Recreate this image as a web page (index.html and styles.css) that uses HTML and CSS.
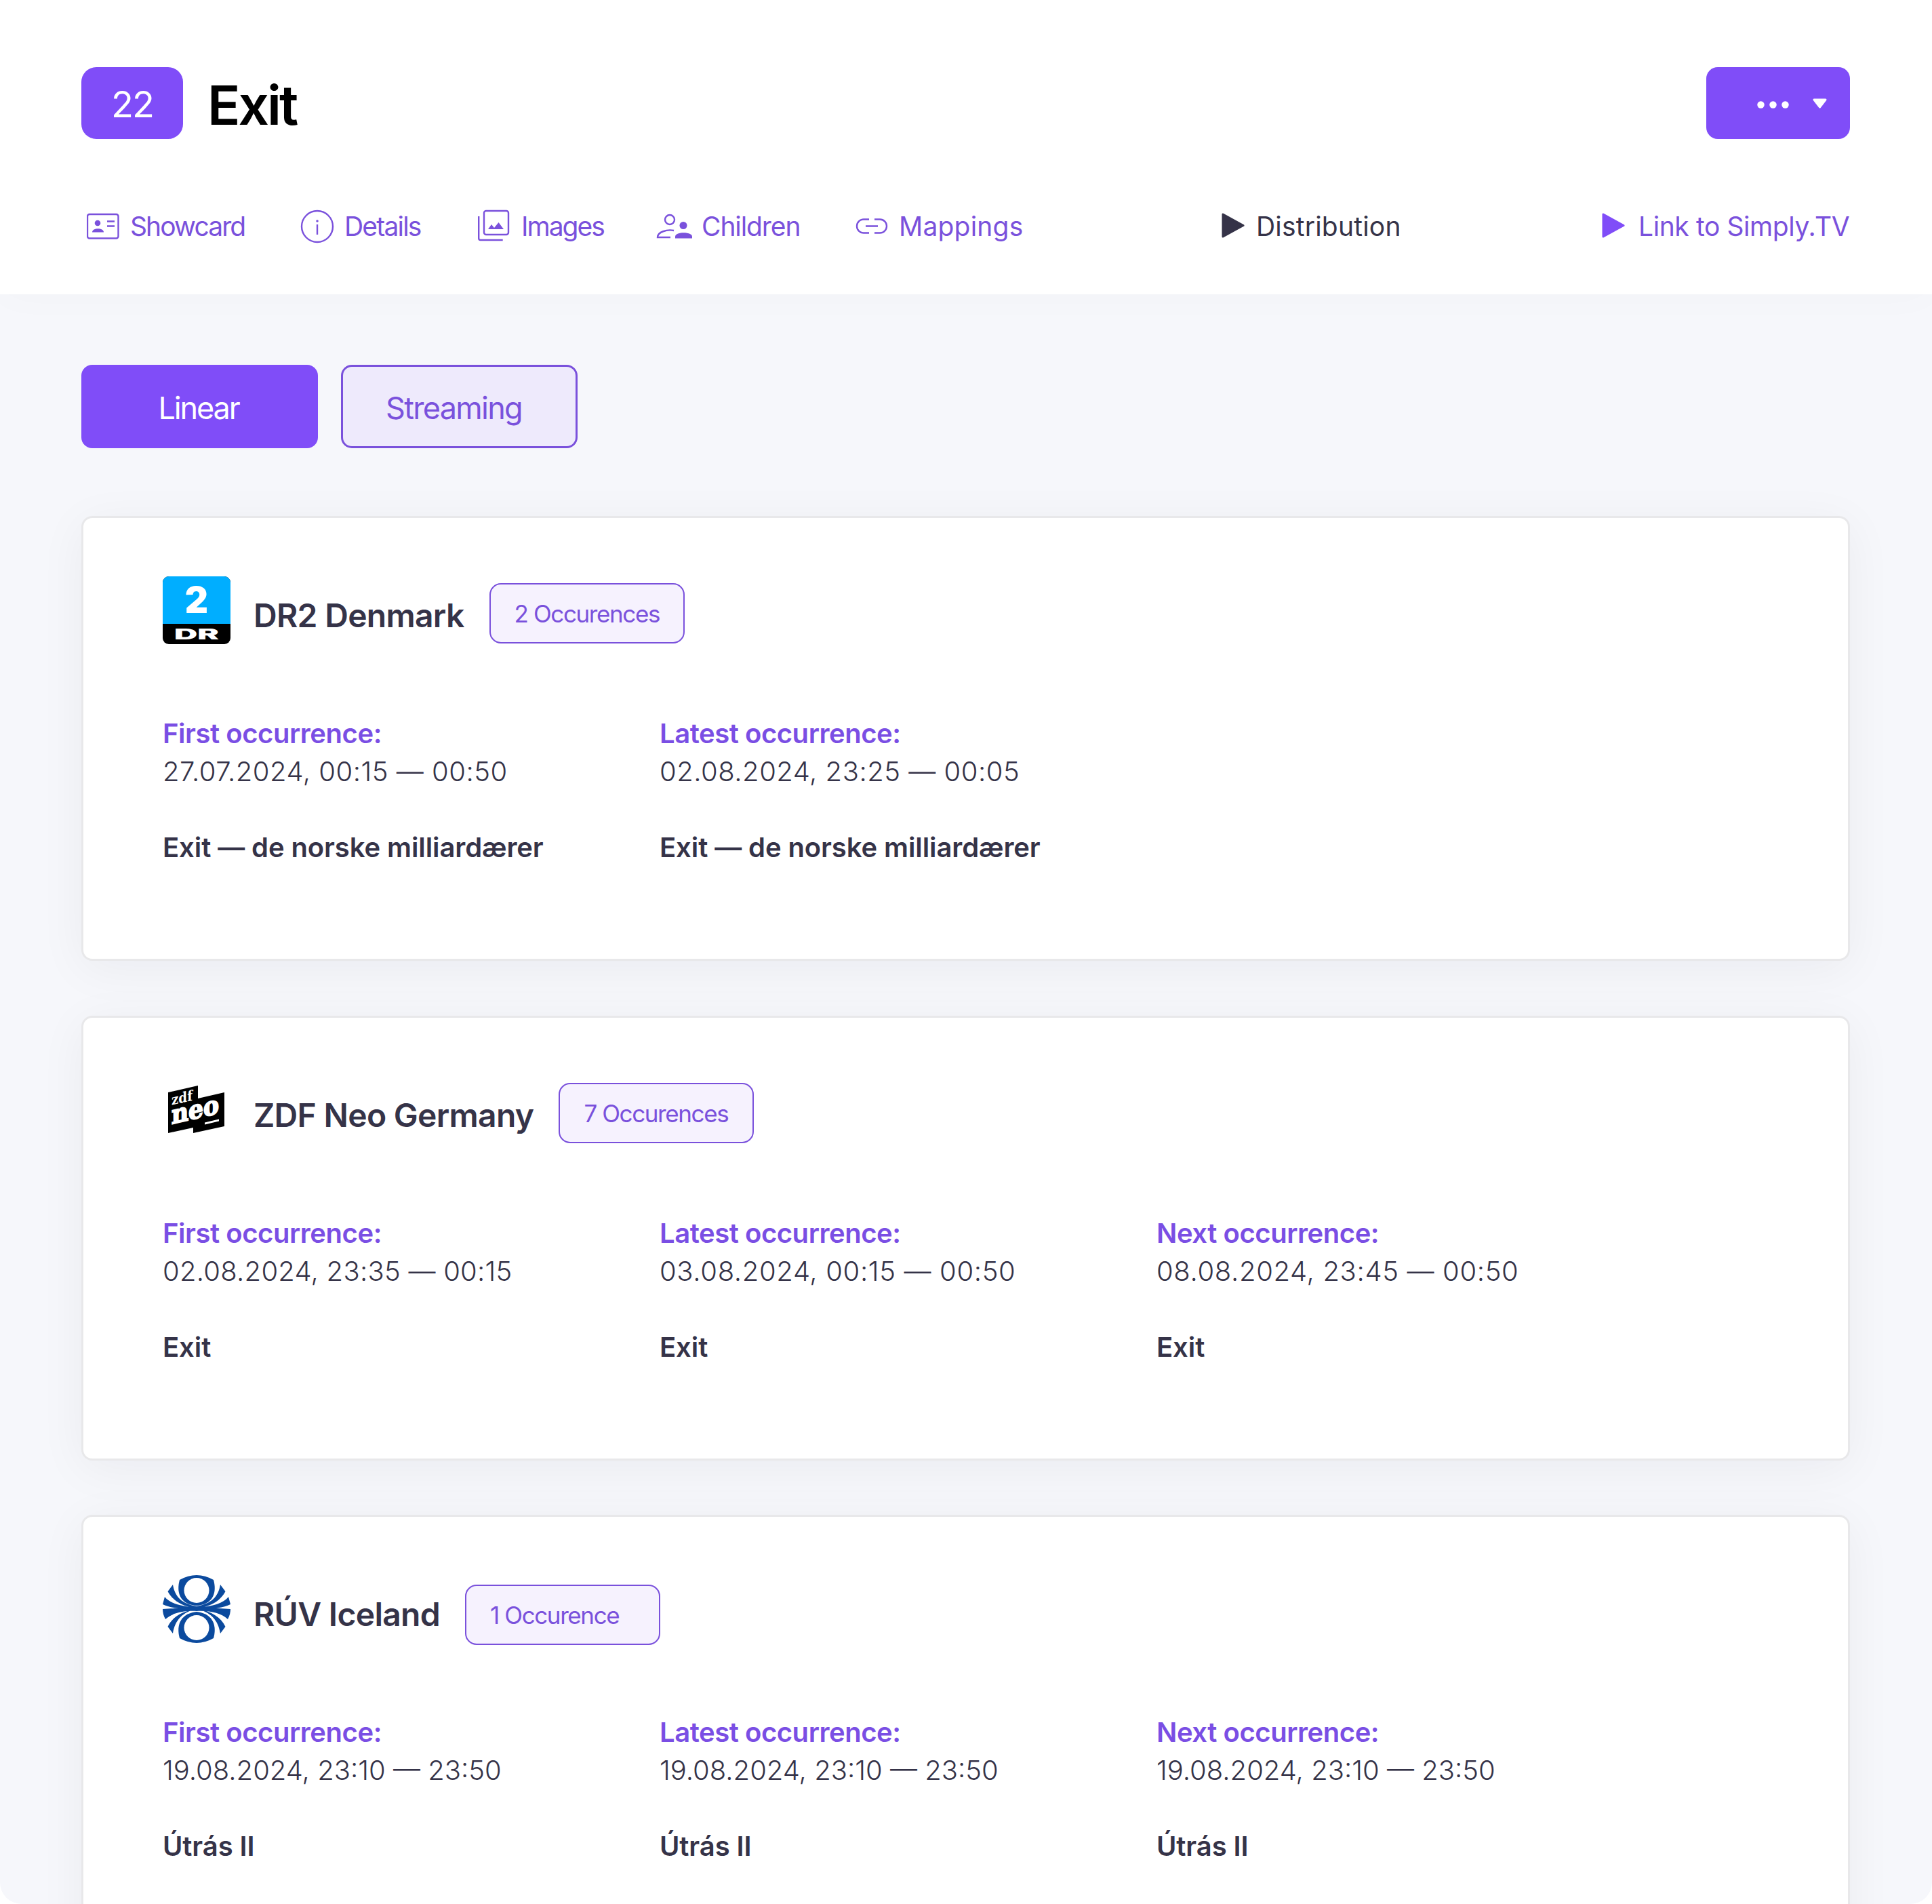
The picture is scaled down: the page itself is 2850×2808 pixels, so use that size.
FILE: index.html
```html
<!DOCTYPE html>
<html lang="en">
<head>
  <meta charset="UTF-8">
  <title>Exit</title>
  <link rel="stylesheet" href="styles.css">
</head>
<body>
<div class="page">
  <header class="header">
    <div class="title-row">
      <span class="count">22</span>
      <h1>Exit</h1>
      <button class="more">
        <svg width="212" height="106" viewBox="0 0 212 106" fill="#fff">
          <circle cx="80.500" cy="55.500" r="5.200"/><circle cx="98.500" cy="55.500" r="5.200"/><circle cx="116.500" cy="55.500" r="5.200"/>
          <path d="M159 48h17l-8.500 11z" stroke="#fff" stroke-width="3" stroke-linejoin="round"/>
        </svg>
      </button>
    </div>
    <nav class="nav">
      <a class="item showcard">
        <svg width="52" height="50" viewBox="0 0 52 50">
          <rect x="1" y="7" width="45.500" height="35.500" rx="3" fill="none" stroke="currentColor" stroke-width="2.400"/>
          <circle cx="16" cy="20" r="4.300"/><path d="M8 33.500c0-7 17-7 17 0z"/>
          <path d="M30 17.500h11M30 24.500h11" stroke="currentColor" stroke-width="2.400"/>
        </svg>
        Showcard</a>
      <a class="item details">
        <svg width="52" height="50" viewBox="0 0 52 50">
          <circle cx="25" cy="25" r="23" fill="none" stroke="currentColor" stroke-width="2.400"/>
          <circle cx="25" cy="17" r="1.800"/><path d="M25 22v15" stroke="currentColor" stroke-width="2.400"/>
        </svg>
        Details</a>
      <a class="item images">
        <svg width="52" height="50" viewBox="0 0 52 50">
          <rect x="10" y="2" width="36" height="35" rx="3" fill="none" stroke="currentColor" stroke-width="2.400"/>
          <path d="M2.200 10v32.500q0 2.500 2.500 2.500h33" fill="none" stroke="currentColor" stroke-width="2.400"/>
          <path d="M16 29l5-7 4 5 6.500-8 7.500 10z"/>
        </svg>
        Images</a>
      <a class="item children">
        <svg width="54" height="50" viewBox="0 0 54 50">
          <circle cx="20" cy="15" r="7" fill="none" stroke="currentColor" stroke-width="2.400"/>
          <path d="M26 31c-10-2-24 2-24 10h19" fill="none" stroke="currentColor" stroke-width="2.400"/>
          <circle cx="40" cy="23.500" r="5.500"/><path d="M28 42.500v-3c1-7 24-7 25 0v3z"/>
        </svg>
        Children</a>
      <a class="item mappings">
        <svg width="52" height="50" viewBox="0 0 52 50" fill="none">
          <path d="M21 14.500h-8a10 10 0 0 0 0 20h8M29 14.500h8a10 10 0 0 1 0 20h-8M16 24.500h18" stroke="currentColor" stroke-width="2.400" fill="none"/>
        </svg>
        Mappings</a>
      <a class="item dark play">
        <svg width="34" height="50" viewBox="0 0 34 50"><path d="M2 7v33l30-16.500z" stroke="currentColor" stroke-width="3" stroke-linejoin="round"/></svg>
        Distribution</a>
      <a class="item play link">
        <svg class="bright" width="34" height="50" viewBox="0 0 34 50"><path d="M2 7v33l30-16.500z" stroke="currentColor" stroke-width="3" stroke-linejoin="round"/></svg>
        Link to Simply.TV</a>
    </nav>
  </header>

  <main>
    <div class="tabs">
      <button class="tab active">Linear</button>
      <button class="tab">Streaming</button>
    </div>

    <section class="card">
      <div class="channel">
        <svg class="logo" viewBox="0 0 100 100">
          <rect width="100" height="100" rx="9" fill="#000"/>
          <path d="M0 70V9a9 9 0 0 1 9-9h82a9 9 0 0 1 9 9v61z" fill="#00aeff"/>
          <text x="50" y="54" class="dr-two">2</text>
          <text x="17" y="92.500" class="dr" textLength="66" lengthAdjust="spacingAndGlyphs">DR</text>
        </svg>
        <h2>DR2 Denmark</h2>
        <span class="pill">2 Occurences</span>
      </div>
      <div class="times">
        <div>
          <b>First occurrence:</b>
          <p>27.07.2024, 00:15 — 00:50</p>
          <strong>Exit — de norske milliardærer</strong>
        </div>
        <div>
          <b>Latest occurrence:</b>
          <p>02.08.2024, 23:25 — 00:05</p>
          <strong>Exit — de norske milliardærer</strong>
        </div>
      </div>
    </section>

    <section class="card">
      <div class="channel">
        <svg class="logo" viewBox="0 0 100 100">
          <path d="M8 24L52 14v19l39-9v50L45 84v-8L8 84z"/>
          <g transform="translate(12 43) skewY(-13)" fill="#fff">
            <text x="1" y="0" class="zdf" textLength="31" lengthAdjust="spacingAndGlyphs">zdf</text>
            <text x="1" y="28" class="neo" textLength="70" lengthAdjust="spacingAndGlyphs">neo</text>
            <rect x="50" y="37" width="21" height="3"/>
          </g>
        </svg>
        <h2>ZDF Neo Germany</h2>
        <span class="pill">7 Occurences</span>
      </div>
      <div class="times">
        <div>
          <b>First occurrence:</b>
          <p class="snug">02.08.2024, 23:35 — 00:15</p>
          <strong>Exit</strong>
        </div>
        <div>
          <b>Latest occurrence:</b>
          <p class="loose">03.08.2024, 00:15 — 00:50</p>
          <strong>Exit</strong>
        </div>
        <div>
          <b>Next occurrence:</b>
          <p class="loose">08.08.2024, 23:45 — 00:50</p>
          <strong>Exit</strong>
        </div>
      </div>
    </section>

    <section class="card">
      <div class="channel">
        <svg class="logo" viewBox="0 0 100 100" fill="#0b4a9e">
          <path d="M25 7Q50-7 75 7C80 25 75 43 50 45 25 43 20 25 25 7z"/>
          <path d="M25 93Q50 107 75 93C80 75 75 57 50 54 25 57 20 75 25 93z"/>
          <path d="M15 14C18 32 28 42 50 46V49C26 46 14 36 7.500 24zM3 32C10 41 25 46 50 48V51C25 50 10 48 0 43zM0 50L50 47V53C30 52 14 56 4 65 1 60 0 54 0 50zM50 50C30 54 18 66 15 86L7.500 76C14 62 28 53 50 50z"/>
          <path d="M85 14C82 32 72 42 50 46V49C74 46 86 36 92.500 24zM97 32C90 41 75 46 50 48V51C75 50 90 48 100 43zM100 50L50 47V53C70 52 86 56 96 65 99 60 100 54 100 50zM50 50C70 54 82 66 85 86L92.500 76C86 62 72 53 50 50z"/>
          <circle cx="50" cy="22.500" r="18.500" fill="#fff"/><circle cx="50" cy="77.500" r="18.500" fill="#fff"/>
        </svg>
        <h2>RÚV Iceland</h2>
        <span class="pill low">1 Occurence</span>
      </div>
      <div class="times">
        <div>
          <b>First occurrence:</b>
          <p class="tight">19.08.2024, 23:10 — 23:50</p>
          <strong>Útrás II</strong>
        </div>
        <div>
          <b>Latest occurrence:</b>
          <p class="tight">19.08.2024, 23:10 — 23:50</p>
          <strong>Útrás II</strong>
        </div>
        <div>
          <b>Next occurrence:</b>
          <p class="tight">19.08.2024, 23:10 — 23:50</p>
          <strong>Útrás II</strong>
        </div>
      </div>
    </section>
  </main>
</div>
</body>
</html>
```
FILE: styles.css
```css
* {
  box-sizing: border-box;
}

body {
  margin: 0;
  background: #fff;
  font-family: Inter, "Liberation Sans", sans-serif;
  color: #353348;
}

.page {
  width: 2850px;
  height: 2808px;
  overflow: hidden;
  background: #f6f7fb;
  border-radius: 0 0 32px 32px;
}

.header {
  height: 434px;
  padding: 99px 121px 0 120px;
  background: #fff;
  box-shadow: 0 0 60px rgba(0, 0, 0, 0.025);
}

.title-row {
  display: flex;
  align-items: center;
  height: 106px;
}

.count {
  width: 150px;
  height: 106px;
  border-radius: 22px;
  background: #804df8;
  color: #fff;
  font-size: 54px;
  letter-spacing: -2px;
  line-height: 110px;
  text-align: center;
}

h1 {
  margin: 5px auto 0 36px;
  color: #000;
  font-size: 80px;
  font-weight: 600;
  letter-spacing: -3px;
  line-height: 100px;
}

button {
  font-family: inherit;
  border: none;
  padding: 0;
}

.more {
  width: 212px;
  height: 106px;
  border-radius: 17px;
  background: #804df8;
}

.more svg {
  display: block;
}

.nav {
  display: grid;
  grid-template-columns: 315px 261px 264px 293px 541px 561px 366px;
  margin: 104px 0 0 8px;
}

.item {
  display: flex;
  align-items: center;
  height: 50px;
  gap: 13px;
  color: #7a51dc;
  fill: currentColor;
  font-size: 39px;
  letter-spacing: 0.2px;
  line-height: 52px;
  white-space: nowrap;
}

.showcard {
  gap: 12px;
  letter-spacing: -1.9px;
}

.details {
  letter-spacing: -1.8px;
}

.images {
  letter-spacing: -2px;
}

.children {
  letter-spacing: -1.1px;
}

.play {
  gap: 17px;
}

.link {
  gap: 20px;
  letter-spacing: -0.4px;
}

.dark {
  color: #353348;
}

.bright {
  color: #804df8;
}

main {
  padding: 104px 121px 0 120px;
}

.tabs {
  display: flex;
  gap: 34px;
  margin-bottom: 100px;
}

.tab {
  width: 349px;
  height: 123px;
  padding: 3px 16px 0 0;
  border: 3px solid #7a51dc;
  border-radius: 16px;
  background: #eeeafc;
  color: #7a51dc;
  font-size: 45px;
  letter-spacing: -1.7px;
}

.tab.active {
  padding-right: 3px;
  background: #804df8;
  border-color: #804df8;
  color: #fff;
  letter-spacing: -2.1px;
}

.card {
  height: 656px;
  margin-bottom: 80.500px;
  padding: 86px 117px;
  border: 3px solid #e8e8ea;
  border-radius: 16px;
  background: #fff;
  box-shadow: 0 12px 70px rgba(20, 20, 30, 0.05);
}

.channel {
  display: flex;
  height: 100px;
}

.logo {
  width: 100px;
  height: 100px;
}

.dr-two {
  fill: #fff;
  font: 900 53px Inter, sans-serif;
  text-anchor: middle;
}

.dr {
  fill: #fff;
  font: 900 21px Inter, sans-serif;
}

.zdf {
  font: bold 21px "DejaVu Serif", serif;
}

.neo {
  font: bold 38px "DejaVu Serif", serif;
  stroke: #fff;
  stroke-width: 2px;
}

h2 {
  margin: 0 37px 0 34px;
  font-size: 48px;
  font-weight: 600;
  letter-spacing: -0.7px;
  line-height: 116px;
}

.pill {
  width: 288px;
  height: 89px;
  margin-top: 10px;
  padding-left: 35px;
  border: 2px solid #7a51dc;
  border-radius: 17px;
  background: #f6f2fe;
  color: #7a51dc;
  font-size: 35px;
  letter-spacing: -1.4px;
  line-height: 86px;
}

.pill.low {
  margin-top: 14px;
}

.times {
  display: grid;
  grid-template-columns: repeat(3, 733px);
  margin-top: 104px;
  font-size: 40px;
  letter-spacing: -0.1px;
  line-height: 56px;
  white-space: nowrap;
}

.times b {
  display: block;
  color: #7a4ee4;
  font-weight: 600;
  letter-spacing: -0.45px;
}

.times p {
  margin: 0 0 56px;
  font-weight: 300;
  letter-spacing: 0.5px;
}

.times .snug {
  letter-spacing: 0.25px;
}

.times .loose {
  letter-spacing: 0.65px;
}

.times .tight {
  letter-spacing: 0;
}

.times strong {
  font-weight: 600;
}
```
